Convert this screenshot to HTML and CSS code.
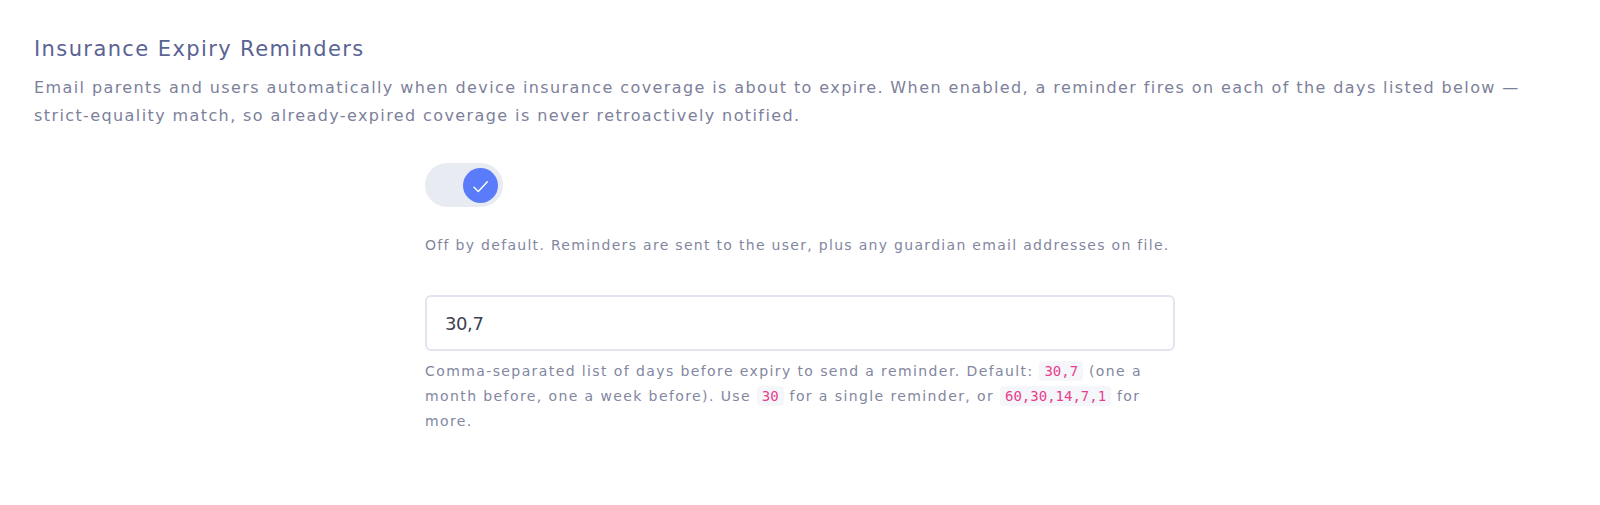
FILE: index.html
```html
<!DOCTYPE html>
<html lang="en">
<head>
    <meta charset="UTF-8">
    <meta name="viewport" content="width=device-width, initial-scale=1.0">
    <title>Insurance Expiry Reminders</title>
    <link rel="stylesheet" href="styles.css">
</head>
<body>
<div class="settings-section">
    <h2 class="section-title">Insurance Expiry Reminders</h2>
    <p class="section-desc">Email parents and users automatically when device insurance coverage is about to expire. When enabled, a reminder fires on each of the days listed below — strict-equality match, so already-expired coverage is never retroactively notified.</p>

    <div class="form-row">
        <div class="form-label"></div>
        <div class="form-control-col">
            <label class="switch">
                <input type="checkbox" id="expiryEnabled" checked>
                <span class="switch-track">
                    <span class="switch-knob">
                        <svg viewBox="0 0 35 35" width="35" height="35">
                            <path d="M11 19.2 L15.3 23.4 L24.3 13.8" fill="none" stroke="#ffffff" stroke-width="1.4" stroke-linecap="round" stroke-linejoin="round"/>
                        </svg>
                    </span>
                </span>
            </label>
            <p class="form-text switch-text">Off by default. Reminders are sent to the user, plus any guardian email addresses on file.</p>
        </div>
    </div>

    <div class="form-row field-row">
        <div class="form-label"></div>
        <div class="form-control-col">
            <input type="text" id="expiryDays" class="text-input" value="30,7">
            <p class="form-text hint-text">Comma-separated list of days before expiry to send a reminder. Default: <code>30,7</code> (one a month before, one a week before). Use <code>30</code> for a single reminder, or <code>60,30,14,7,1</code> for more.</p>
        </div>
    </div>
</div>
</body>
</html>
```

FILE: styles.css
```css
* {
    margin: 0;
    padding: 0;
    box-sizing: border-box;
}

:root {
    --title-color: #5a6393;
    --text-color: #7d819b;
    --muted-color: #82879f;
    --input-text: #3e4252;
    --input-border: #e2e5ee;
    --track-bg: #e8ebf2;
    --accent-color: #5b7cfa;
    --code-color: #e83e8c;
    --code-bg: #f5f6f9;
}

body {
    background-color: #ffffff;
    font-family: "DejaVu Sans", sans-serif;
    color: var(--text-color);
}

.settings-section {
    padding: 37px 34px 0;
}

.section-title {
    font-size: 21px;
    line-height: 25px;
    font-weight: 500;
    letter-spacing: 1.4px;
    color: var(--title-color);
    margin-bottom: 12px;
}

.section-desc {
    font-size: 16px;
    line-height: 27.5px;
    letter-spacing: 1.4px;
}

.form-row {
    display: grid;
    grid-template-columns: 391px 750px;
    margin-top: 34px;
}

.field-row {
    margin-top: 39px;
}

/* toggle switch */
.switch {
    display: inline-block;
    cursor: pointer;
}

.switch input {
    display: none;
}

.switch-track {
    display: flex;
    align-items: center;
    justify-content: flex-start;
    width: 78px;
    height: 44px;
    padding: 0 5px;
    border-radius: 22px;
    background-color: var(--track-bg);
}

.switch input:checked + .switch-track {
    justify-content: flex-end;
}

.switch-knob {
    display: flex;
    width: 35px;
    height: 35px;
    border-radius: 50%;
    background-color: var(--accent-color);
}

.form-text {
    font-size: 14px;
    letter-spacing: 1.3px;
    color: var(--muted-color);
}

.switch-text {
    margin-top: 28px;
    line-height: 21px;
}

.text-input {
    display: block;
    width: 100%;
    height: 56px;
    padding: 0 18px;
    border: 2px solid var(--input-border);
    border-radius: 6px;
    font-family: inherit;
    font-size: 18px;
    letter-spacing: -0.4px;
    color: var(--input-text);
    outline: none;
}

.text-input:focus {
    border-color: var(--accent-color);
}

.hint-text {
    margin-top: 8px;
    line-height: 25px;
    letter-spacing: 1.4px;
}

code {
    font-family: "DejaVu Sans Mono", monospace;
    font-size: 14px;
    line-height: 17px;
    letter-spacing: 0;
    color: var(--code-color);
    background-color: var(--code-bg);
    padding: 2px 5px;
    border-radius: 4px;
}
```
